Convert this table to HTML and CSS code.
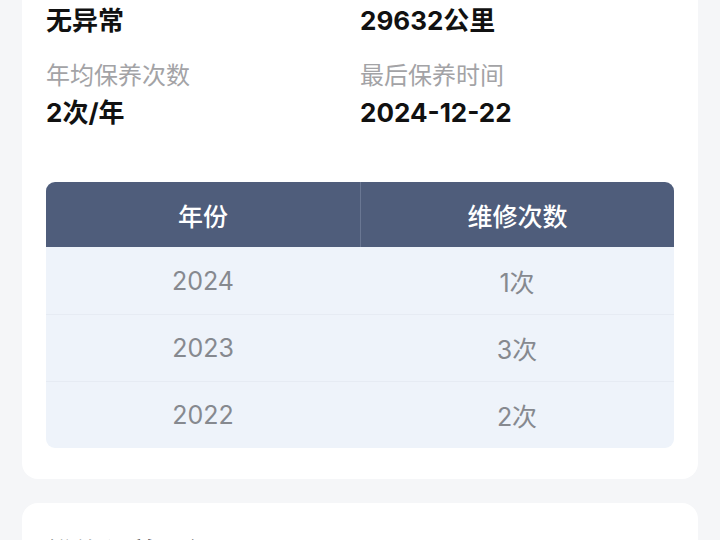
FILE: index.html
```html
<!DOCTYPE html>
<html lang="zh-CN">
<head>
<meta charset="utf-8">
<link rel="stylesheet" href="styles.css">
</head>
<body>
<div class="page">
  <section class="card card-first">
    <div class="info-grid">
      <div class="item">
        <div class="label">事故排查</div>
        <div class="value">无异常</div>
      </div>
      <div class="item">
        <div class="label">表显里程</div>
        <div class="value">29632公里</div>
      </div>
      <div class="item">
        <div class="label">年均保养次数</div>
        <div class="value">2次/年</div>
      </div>
      <div class="item">
        <div class="label">最后保养时间</div>
        <div class="value">2024-12-22</div>
      </div>
    </div>
    <div class="table">
      <div class="thead">
        <div class="th">年份</div>
        <div class="th">维修次数</div>
      </div>
      <div class="tr"><div class="td">2024</div><div class="td">1次</div></div>
      <div class="tr"><div class="td">2023</div><div class="td">3次</div></div>
      <div class="tr"><div class="td">2022</div><div class="td">2次</div></div>
    </div>
  </section>
  <section class="card card-second">
    <h2 class="title">维修保养明细</h2>
  </section>
</div>
</body>
</html>
```
FILE: styles.css
```css
* { box-sizing: border-box; }
html, body { margin: 0; padding: 0; }
body {
  background: #f5f6f8;
  font-family: Inter, "Noto Sans CJK SC", "Noto Sans", sans-serif;
  overflow: hidden;
  height: 540px;
}
.page {
  padding: 0 22px;
  display: flex;
  flex-direction: column;
  gap: 24px;
}
.card {
  background: #ffffff;
  border-radius: 16px;
  padding: 0 24px;
}
.card-first {
  margin-top: -60px;
  padding-top: 27px;
  padding-bottom: 31px;
}
.info-grid {
  display: grid;
  grid-template-columns: 1fr 1fr;
  row-gap: 20px;
}
.item {
  display: flex;
  flex-direction: column;
  gap: 2px;
}
.label {
  font-size: 24px;
  line-height: 34px;
  color: #a3a3a6;
}
.value {
  font-size: 26px;
  line-height: 36px;
  font-weight: 700;
  color: #111111;
}
.table {
  margin-top: 51px;
  border-radius: 9px;
  overflow: hidden;
  background: #eef3fa;
}
.thead {
  display: grid;
  grid-template-columns: 1fr 1fr;
  background: #4f5d7b;
  height: 65px;
}
.th {
  display: flex;
  align-items: center;
  justify-content: center;
  color: #ffffff;
  font-size: 25px;
  font-weight: 500;
}
.th + .th { border-left: 1px solid #6a7793; }
.tr {
  display: grid;
  grid-template-columns: 1fr 1fr;
  height: 67px;
  border-top: 1px solid #e6ebf3;
}
.thead + .tr { border-top: none; }
.td {
  display: flex;
  align-items: center;
  justify-content: center;
  color: #86898f;
  font-size: 25px;
}
.card-second {
  padding-top: 31px;
  height: 120px;
}
.title {
  margin: 0;
  font-size: 28px;
  line-height: 40px;
  font-weight: 700;
  color: #111111;
}
```
